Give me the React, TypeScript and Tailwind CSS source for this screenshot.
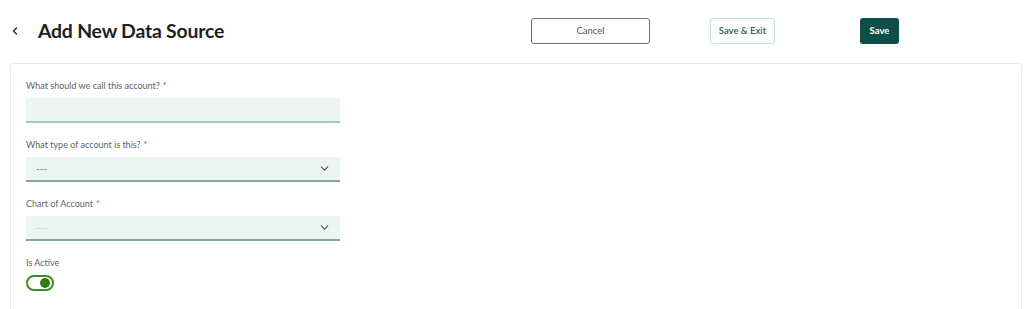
import { ChevronDown, ChevronLeft } from "lucide-react";

// New data source form: header with actions, card with fields and active toggle.
function Label({ text, required }: { text: string; required?: boolean }) {
  return (
    <label className="block h-[12px] text-[9px] leading-[12px] text-[#5f6368]">
      {text}
      {required ? <span className="ml-[3px] text-[#d93a3a]">*</span> : null}
    </label>
  );
}

function SelectBox({ muted }: { muted?: boolean }) {
  return (
    <div className="mt-[6px] flex h-[25px] w-[314px] items-center justify-between border-b-2 border-[#7ea6a2] bg-[#edf5f3] pl-[10px] pr-[9px]">
      <span className={muted ? "text-[10px] text-[#c3c9c8]" : "text-[10px] text-[#6b6f70]"}>---</span>
      <ChevronDown className="h-[13px] w-[13px] text-[#555]" strokeWidth={2.2} />
    </div>
  );
}

export default function App() {
  return (
    <div className="h-[309px] overflow-hidden bg-white font-['Lato',sans-serif] text-[#1f1f1f]">
      <header className="flex h-[63px] items-center pb-[1px]">
        <ChevronLeft className="ml-[9px] h-[12px] w-[12px] text-[#333]" strokeWidth={3} />
        <h1 className="ml-[17px] text-[19.4px] font-bold tracking-[-0.2px] text-[#1e1e1e]">Add New Data Source</h1>
        <div className="ml-auto mr-[125px] flex items-center">
          <button className="h-[26px] w-[119px] rounded-[3px] border border-[#6f6f6f] bg-white text-[9.5px] text-[#555]">
            Cancel
          </button>
          <button className="ml-[60px] h-[26px] w-[65px] rounded-[3px] border border-[#bfe0db] bg-white text-[9.5px] font-semibold text-[#2f5e5a]">
            Save &amp; Exit
          </button>
          <button className="ml-[85px] h-[26px] w-[39px] rounded-[3px] bg-[#0d4f48] text-[9.5px] font-bold text-white">
            Save
          </button>
        </div>
      </header>

      <main className="ml-[10px] mr-[2px] h-[260px] rounded-t-[3px] border border-[#e6e8e8] px-[15px] pt-[16px] shadow-[0_0_2px_rgba(0,0,0,0.04)]">
        <Label text="What should we call this account?" required />
        <div className="mt-[6px] h-[25px] w-[314px] border-b-2 border-[#a3c6c2] bg-[#edf5f3]" />

        <div className="mt-[16px]">
          <Label text="What type of account is this?" required />
          <SelectBox />
        </div>

        <div className="mt-[16px]">
          <Label text="Chart of Account" required />
          <SelectBox muted />
        </div>

        <div className="mt-[16px]">
          <Label text="Is Active" />
          <div className="mt-[6px] flex h-[16px] w-[28px] items-center justify-end rounded-full border-2 border-[#3f8f22] pr-[2px]">
            <span className="h-[10px] w-[10px] rounded-full bg-[#2f7d12]" />
          </div>
        </div>
      </main>
    </div>
  );
}
